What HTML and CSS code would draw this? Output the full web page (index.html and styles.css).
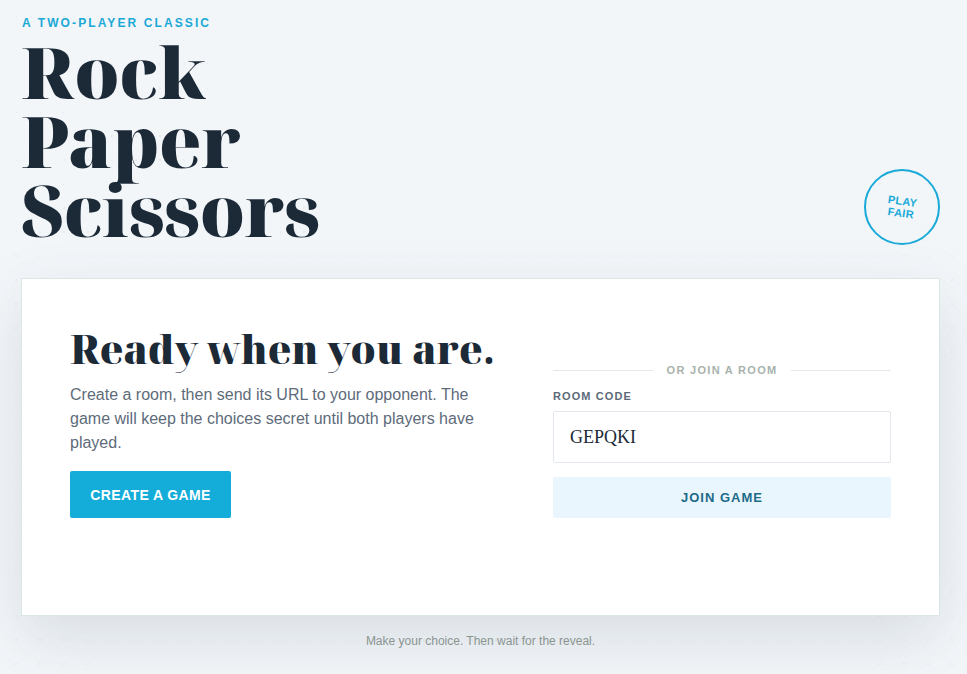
FILE: index.html
```html
<!DOCTYPE html>
<html lang="en">
<head>
<meta charset="utf-8">
<title>Rock Paper Scissors</title>
<link rel="stylesheet" href="styles.css">
</head>
<body>
<main class="page">
  <header class="masthead">
    <div class="brand">
      <p class="eyebrow">A two-player classic</p>
      <h1 class="title">Rock<br>Paper<br>Scissors</h1>
    </div>
    <div class="badge"><span class="badge-text">PLAY<br>FAIR</span></div>
  </header>

  <section class="card">
    <div class="intro">
      <h2 class="intro-title">Ready when you are.</h2>
      <p class="intro-text">Create a room, then send its URL to your opponent. The game will keep the choices secret until both players have played.</p>
      <button class="btn-primary" type="button">CREATE A GAME</button>
    </div>
    <form class="join">
      <div class="divider"><span>OR JOIN A ROOM</span></div>
      <label class="field-label" for="code">ROOM CODE</label>
      <input class="field" id="code" type="text" value="GEPQKI">
      <button class="btn-secondary" type="button">JOIN GAME</button>
    </form>
  </section>

  <footer class="foot">Make your choice. Then wait for the reveal.</footer>
</main>
</body>
</html>
```
FILE: styles.css
```css
html, body {
  margin: 0;
  padding: 0;
}
body {
  background-color: #f3f6f9;
  background-image: radial-gradient(circle, #e6ebef 1px, transparent 1.4px);
  background-size: 24px 24px;
  background-position: 4px 4px;
  font-family: "Liberation Sans", Arial, sans-serif;
  color: #1c2a38;
  min-height: 674px;
}
.page {
  width: 919px;
  margin-left: 21px;
  padding-top: 16px;
}
.masthead {
  display: flex;
  justify-content: space-between;
  align-items: flex-end;
}
.eyebrow {
  margin: 0 0 0 1px;
  font-size: 12px;
  line-height: 14px;
  font-weight: 700;
  letter-spacing: 2.1px;
  text-transform: uppercase;
  color: #1aa9d6;
}
.title {
  margin: 7px 0 0 0;
  font-family: "Noto Serif Display", "Noto Serif", serif;
  font-weight: 900;
  font-size: 71px;
  line-height: 69px;
  letter-spacing: -0.3px;
  color: #1c2a38;
}
.badge {
  width: 72px;
  height: 72px;
  border: 2px solid #1aaad8;
  border-radius: 50%;
  display: flex;
  align-items: center;
  justify-content: center;
  margin-bottom: -1px;
}
.badge-text {
  display: block;
  transform: rotate(8deg);
  font-size: 11px;
  line-height: 12px;
  font-weight: 700;
  text-align: center;
  color: #1aaad8;
  letter-spacing: 0.3px;
}
.card {
  margin-top: 34px;
  background: #ffffff;
  border: 1px solid #dbe7e3;
  box-shadow: 0 22px 60px rgba(40, 62, 84, 0.13);
  box-sizing: border-box;
  height: 338px;
  padding: 40px 48px 97px 48px;
  display: grid;
  grid-template-columns: 435px 338px;
  column-gap: 48px;
  align-items: end;
}
.intro-title {
  margin: 0 0 10px;
  font-family: "Noto Serif Display", "Noto Serif", serif;
  font-weight: 900;
  font-size: 39.5px;
  line-height: 48px;
  color: #1c2a38;
}
.intro-text {
  margin: 0 0 16px;
  font-size: 16px;
  line-height: 24px;
  color: #5e6b7a;
}
.btn-primary {
  display: block;
  width: 161px;
  height: 47px;
  border: 0;
  border-radius: 2px;
  background: #14acd8;
  color: #ffffff;
  font-family: "Liberation Sans", Arial, sans-serif;
  font-weight: 700;
  font-size: 14px;
  letter-spacing: 0.4px;
  padding: 0;
}
.join {
  margin: 0;
  display: flex;
  flex-direction: column;
}
.divider {
  display: flex;
  align-items: center;
  gap: 14px;
  margin-bottom: 13px;
}
.divider::before,
.divider::after {
  content: "";
  flex: 1;
  height: 1px;
  background: #e4e9ee;
}
.divider span {
  font-size: 11px;
  line-height: 13px;
  font-weight: 700;
  letter-spacing: 1.3px;
  color: #a8b2ad;
}
.field-label {
  font-size: 11px;
  line-height: 13px;
  font-weight: 700;
  letter-spacing: 1.1px;
  color: #5c6a78;
  margin-bottom: 8px;
}
.field {
  box-sizing: border-box;
  width: 100%;
  height: 52px;
  border: 1px solid #e1e7ec;
  border-radius: 2px;
  padding: 0 16px;
  font-family: "Liberation Serif", "Times New Roman", serif;
  font-size: 18px;
  color: #1c2a38;
  background: #fff;
  outline: none;
  margin-bottom: 14px;
}
.btn-secondary {
  width: 100%;
  height: 41px;
  border: 0;
  border-radius: 2px;
  background: #e9f6fd;
  color: #1d6a89;
  font-family: "Liberation Sans", Arial, sans-serif;
  font-weight: 700;
  font-size: 13px;
  letter-spacing: 1px;
  padding: 0;
}
.foot {
  margin-top: 18px;
  text-align: center;
  font-size: 12px;
  line-height: 14px;
  color: #8a9590;
}
```
